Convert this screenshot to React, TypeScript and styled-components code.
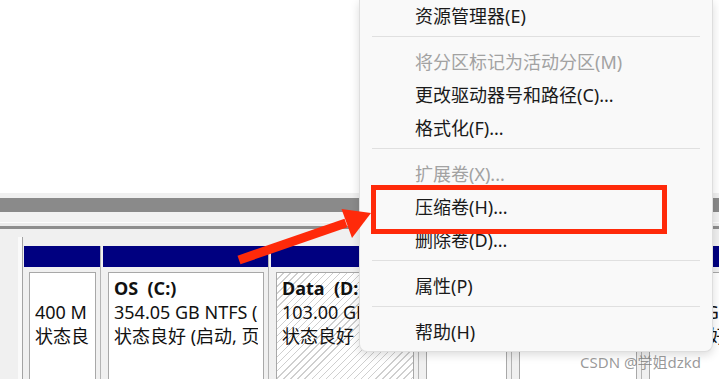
import styled, { createGlobalStyle } from "styled-components"

const GlobalStyle = createGlobalStyle`
  html, body {
    margin: 0;
    padding: 0;
    overflow: hidden;
    background: #fff;
  }
  body {
    font-family: "Noto Sans", "Noto Sans CJK SC", sans-serif;
  }
`

type Part = {
  width: number
  title?: string
  size?: string
  status?: string
  hatched?: boolean
}

const parts: Part[] = [
  { width: 77, size: "400 M", status: "状态良" },
  { width: 166, title: "OS  (C:)", size: "354.05 GB NTFS (启动, 页面文件)", status: "状态良好 (启动, 页面文件, 故障转储)" },
  { width: 148, title: "Data  (D:)", size: "103.00 GB NTFS", status: "状态良好 (基本数据分区)", hatched: true },
  { width: 91 },
  { width: 128 },
  { width: 117, size: "16.00 GB", status: "状态良好" },
]

type MenuEntry = { label: string; disabled?: boolean } | "sep"

const menu: MenuEntry[] = [
  { label: "资源管理器(E)" },
  "sep",
  { label: "将分区标记为活动分区(M)", disabled: true },
  { label: "更改驱动器号和路径(C)..." },
  { label: "格式化(F)..." },
  "sep",
  { label: "扩展卷(X)...", disabled: true },
  { label: "压缩卷(H)..." },
  { label: "删除卷(D)..." },
  "sep",
  { label: "属性(P)" },
  "sep",
  { label: "帮助(H)" },
]

export default function App() {
  return (
    <>
      <GlobalStyle />
      <Window>
        <TopPane />
        <Splitter />
        <ScrollTrack />
        <Ruler />
        <RulerShade />
        <DiskArea>
          <LabelColumn />
          <Partitions>
            {parts.map((p, i) => (
              <Partition key={i} $width={p.width}>
                <PartHeader />
                <PartBody>
                  <PartInner $hatched={p.hatched}>
                    <TextClip>
                      <PartTitle>{p.title || "\u00a0"}</PartTitle>
                      <PartLine>{p.size || "\u00a0"}</PartLine>
                      <PartLine>{p.status || "\u00a0"}</PartLine>
                    </TextClip>
                  </PartInner>
                </PartBody>
              </Partition>
            ))}
          </Partitions>
        </DiskArea>

        <ContextMenu>
          {menu.map((m, i) =>
            m === "sep" ? (
              <Separator key={i} />
            ) : (
              <MenuItem key={i} $disabled={m.disabled}>
                {m.label}
              </MenuItem>
            )
          )}
        </ContextMenu>

        <Highlight />
        <ArrowLayer width="719" height="379" viewBox="0 0 719 379">
          <line x1="239" y1="260" x2="346" y2="223" stroke="#ff2a0a" strokeWidth="9" />
          <polygon points="341.5,209 371,213 352,238" fill="#ff2a0a" />
        </ArrowLayer>

        <Watermark>CSDN @学姐dzkd</Watermark>
      </Window>
    </>
  )
}

const Window = styled.div`
  position: relative;
  width: 719px;
  height: 379px;
  overflow: hidden;
  display: flex;
  flex-direction: column;
  background: #fff;
`

const TopPane = styled.div`
  height: 193px;
  flex-shrink: 0;
  background: #fff;
`

const Splitter = styled.div`
  height: 5px;
  flex-shrink: 0;
  background: #f0f0f0;
`

const ScrollTrack = styled.div`
  height: 14px;
  flex-shrink: 0;
  background: #8a8a8a;
`

const Ruler = styled.div`
  height: 10px;
  flex-shrink: 0;
  background: #f2f2f2;
  border-bottom: 1px solid #fdfdfd;
`

const RulerShade = styled.div`
  height: 3px;
  flex-shrink: 0;
  background: #ececec;
  border-bottom: 3px solid #8e8e8e;
`

const DiskArea = styled.div`
  flex: 1;
  display: flex;
  background: #f0f0f0;
`

const LabelColumn = styled.div`
  width: 22px;
  margin-top: 8px;
  flex-shrink: 0;
  background: linear-gradient(to right, #f0f0f0 18px, #fafafa 18px);
  border-right: 1px solid #a3a3a3;
`

const Partitions = styled.div`
  display: flex;
  padding: 17px 0 0 1px;
  gap: 2px;
`

const Partition = styled.div<{ $width: number }>`
  width: ${p => p.$width}px;
  flex-shrink: 0;
  display: flex;
  flex-direction: column;
  border-right: 1px solid #b4b4b4;
  box-sizing: border-box;
`

const PartHeader = styled.div`
  height: 21px;
  background: #000080;
`

const PartBody = styled.div`
  flex: 1;
  display: flex;
  padding: 5px 4px 0 5px;
`

const PartInner = styled.div<{ $hatched?: boolean }>`
  flex: 1;
  min-width: 0;
  padding: 3px 5px 0 5px;
  border: 1px solid #a8a8a8;
  border-bottom: none;
  background: ${p =>
    p.$hatched
      ? "repeating-linear-gradient(135deg, #ffffff 0 4px, #cfcfcf 4px 5px)"
      : "#ffffff"};
`

const TextClip = styled.div`
  overflow: hidden;
  white-space: pre;
  color: #111;
  font-size: 18px;
  line-height: 24px;
`

const PartTitle = styled.div`
  font-weight: 700;
`

const PartLine = styled.div``

const ContextMenu = styled.div`
  position: absolute;
  left: 359px;
  top: 0;
  width: 354px;
  box-sizing: border-box;
  padding-bottom: 2px;
  background: #f9f9f9;
  border: 1px solid #dedede;
  border-top: none;
  border-radius: 0 0 8px 8px;
  box-shadow: 0 3px 10px rgba(0, 0, 0, 0.14);
`

const MenuItem = styled.div<{ $disabled?: boolean }>`
  height: 33px;
  line-height: 33px;
  padding-left: 55px;
  font-size: 18px;
  color: ${p => (p.$disabled ? "#a2a2a2" : "#1a1a1a")};
  white-space: nowrap;
`

const Separator = styled.div`
  height: 1px;
  margin: 3px 12px 9px;
  background: #e0e0e0;
`

const Highlight = styled.div`
  position: absolute;
  left: 371px;
  top: 185px;
  width: 296px;
  height: 49px;
  box-sizing: border-box;
  border: 5px solid #ff2a0a;
`

const ArrowLayer = styled.svg`
  position: absolute;
  left: 0;
  top: 0;
  pointer-events: none;
`

const Watermark = styled.div`
  position: absolute;
  left: 580px;
  top: 352px;
  font-size: 15px;
  line-height: 20px;
  color: rgba(120, 120, 120, 0.75);
  white-space: nowrap;
`
